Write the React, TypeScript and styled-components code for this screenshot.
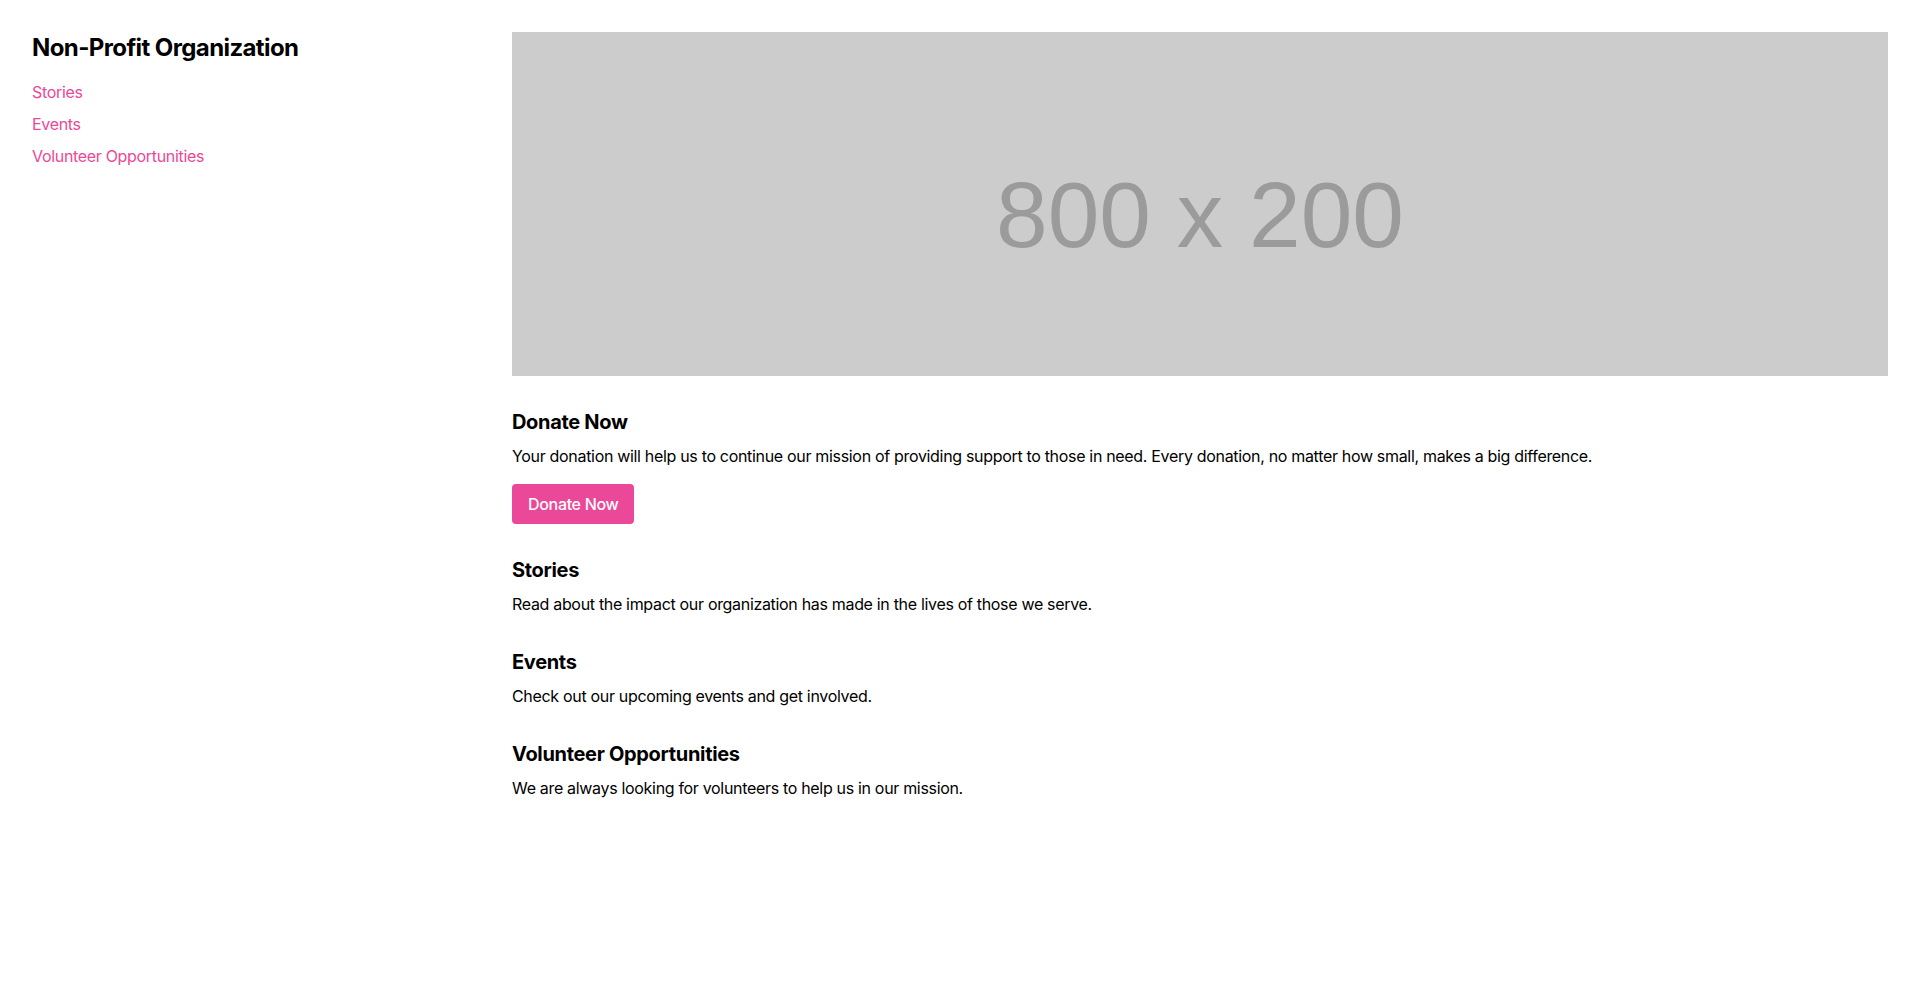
import styled, { createGlobalStyle } from "styled-components";

const GlobalStyle = createGlobalStyle`
  * {
    box-sizing: border-box;
  }

  body {
    margin: 0;
    background: #ffffff;
    color: #000000;
    font-family: Inter, "Noto Sans", system-ui, sans-serif;
    letter-spacing: -0.02em;
  }
`;

const navItems = ["Stories", "Events", "Volunteer Opportunities"];

const sections = [
  {
    title: "Stories",
    text: "Read about the impact our organization has made in the lives of those we serve.",
  },
  {
    title: "Events",
    text: "Check out our upcoming events and get involved.",
  },
  {
    title: "Volunteer Opportunities",
    text: "We are always looking for volunteers to help us in our mission.",
  },
];

const Shell = styled.div`
  display: flex;
  min-height: 100vh;
`;

const Sidebar = styled.aside`
  width: 480px;
  flex-shrink: 0;
  padding: 32px;
`;

const Brand = styled.h1`
  margin: 0 0 16px;
  font-size: 24px;
  line-height: 32px;
  font-weight: 700;
  letter-spacing: -0.025em;
`;

const NavList = styled.nav`
  display: flex;
  flex-direction: column;
  gap: 8px;
`;

const NavLink = styled.a`
  font-size: 16px;
  line-height: 24px;
  color: #ec4899;
  text-decoration: none;
  align-self: flex-start;

  &:hover {
    text-decoration: underline;
  }
`;

const Main = styled.main`
  flex: 1;
  min-width: 0;
  padding: 32px;
`;

const Banner = styled.svg`
  display: block;
  width: 100%;
  height: auto;
  margin-bottom: 32px;
`;

const Section = styled.section`
  margin-bottom: 32px;
`;

const SectionTitle = styled.h2`
  margin: 0 0 8px;
  font-size: 20px;
  line-height: 28px;
  font-weight: 700;
`;

const SectionText = styled.p`
  margin: 0;
  font-size: 16px;
  line-height: 24px;
`;

const DonateButton = styled.button`
  margin-top: 16px;
  padding: 8px 16px;
  border: 0;
  border-radius: 4px;
  background: #ec4899;
  color: #ffffff;
  font-family: inherit;
  font-size: 16px;
  line-height: 24px;
  font-weight: 500;
  letter-spacing: inherit;
  cursor: pointer;

  &:hover {
    background: #db2777;
  }
`;

const App = () => {
  return (
    <>
      <GlobalStyle />
      <Shell>
        <Sidebar>
          <Brand>Non-Profit Organization</Brand>
          <NavList>
            {navItems.map((item) => (
              <NavLink key={item} href="#">
                {item}
              </NavLink>
            ))}
          </NavList>
        </Sidebar>

        <Main>
          <Banner viewBox="0 0 800 200" role="img" aria-label="800 x 200">
            <rect width="800" height="200" fill="#cccccc" />
            <text
              x="400"
              y="125"
              textAnchor="middle"
              fill="#9b9b9b"
              fontFamily="'Liberation Sans', Arial, sans-serif"
              fontSize="54"
              letterSpacing="0"
            >
              800 x 200
            </text>
          </Banner>

          <Section>
            <SectionTitle>Donate Now</SectionTitle>
            <SectionText>
              Your donation will help us to continue our mission of providing support to those in need. Every
              donation, no matter how small, makes a big difference.
            </SectionText>
            <DonateButton>Donate Now</DonateButton>
          </Section>

          {sections.map((section) => (
            <Section key={section.title}>
              <SectionTitle>{section.title}</SectionTitle>
              <SectionText>{section.text}</SectionText>
            </Section>
          ))}
        </Main>
      </Shell>
    </>
  );
};

export default App;
